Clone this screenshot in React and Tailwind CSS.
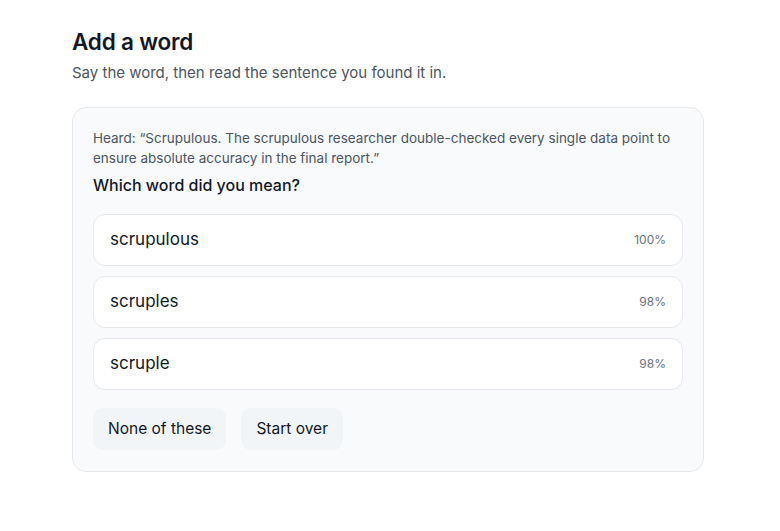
import { useState } from 'react';

const options = [
  { word: 'scrupulous', score: '100%' },
  { word: 'scruples', score: '98%' },
  { word: 'scruple', score: '98%' },
];

const App = () => {
  const [picked, setPicked] = useState(null);

  return (
    <div className="min-h-screen bg-white font-['Inter',sans-serif] text-[#0f172a]">
      <div className="w-[632px] ml-[72px] pt-[27px]">
        {/* Heading */}
        <h1 className="text-[22.5px] leading-[30px] font-semibold tracking-[-0.2px] text-[#111827]">Add a word</h1>
        <p className="mt-[5px] text-[15px] leading-[22px] text-[#4b5563]">
          Say the word, then read the sentence you found it in.
        </p>

        {/* Card */}
        <div className="mt-[23px] rounded-[14px] border border-[#e5e7eb] bg-[#f8fafc] px-[20px] pt-[20px] pb-[21px]">
          <p className="text-[13.5px] leading-[20px] text-[#4b5563]">
            Heard: “Scrupulous. The scrupulous researcher double-checked every single data point to
            ensure absolute accuracy in the final report.”
          </p>
          <p className="mt-[6px] text-[16px] leading-[22px] font-medium text-[#111827]">Which word did you mean?</p>

          <div className="mt-[18px] flex flex-col gap-[10px]">
            {options.map((o) => (
              <button
                key={o.word}
                onClick={() => setPicked(o.word)}
                className={`flex h-[52px] items-center justify-between rounded-[12px] border bg-white px-[16px] text-left ${
                  picked === o.word ? 'border-[#94a3b8]' : 'border-[#e5e7eb]'
                }`}
              >
                <span className="text-[17px] text-[#111827]">{o.word}</span>
                <span className="text-[12px] text-[#6b7280]">{o.score}</span>
              </button>
            ))}
          </div>

          <div className="mt-[18px] flex gap-[15px]">
            <button className="h-[42px] rounded-[10px] bg-[#f2f5f8] px-[15px] text-[15.5px] text-[#111827]">
              None of these
            </button>
            <button className="h-[42px] rounded-[10px] bg-[#f2f5f8] px-[15px] text-[15.5px] text-[#111827]">
              Start over
            </button>
          </div>
        </div>
      </div>
    </div>
  );
};

export default App;
